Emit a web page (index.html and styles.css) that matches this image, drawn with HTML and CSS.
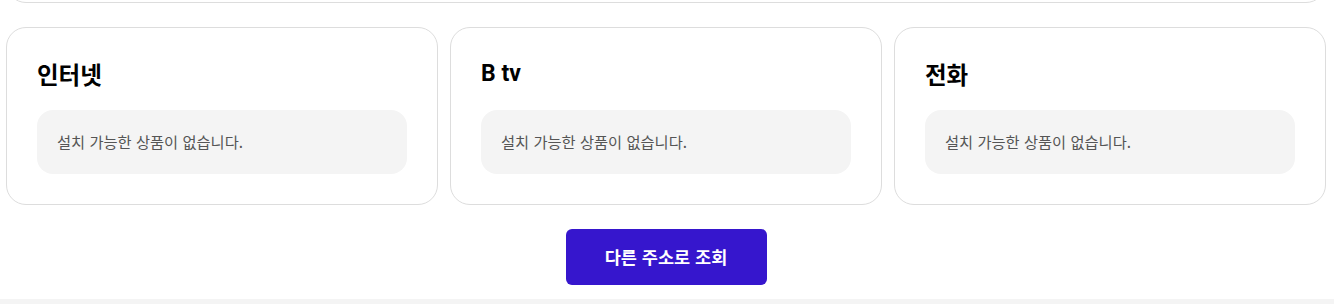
FILE: index.html
```html
<!DOCTYPE html>
<html lang="ko">
<head>
<meta charset="utf-8">
<link rel="stylesheet" href="styles.css">
</head>
<body>
<div class="page">
  <div class="top-card"></div>
  <div class="cards">
    <section class="card">
      <h3 class="card-title">인터넷</h3>
      <div class="empty">설치 가능한 상품이 없습니다.</div>
    </section>
    <section class="card">
      <h3 class="card-title latin">B tv</h3>
      <div class="empty">설치 가능한 상품이 없습니다.</div>
    </section>
    <section class="card">
      <h3 class="card-title">전화</h3>
      <div class="empty">설치 가능한 상품이 없습니다.</div>
    </section>
  </div>
  <div class="actions">
    <button class="btn-primary" type="button">다른 주소로 조회</button>
  </div>
</div>
<div class="footer"></div>
</body>
</html>
```
FILE: styles.css
```css
* { box-sizing: border-box; }
html, body { margin: 0; padding: 0; background: #fff; }
body {
  font-family: "Liberation Sans", "Noto Sans CJK KR", sans-serif;
  color: #000;
  overflow: hidden;
}
.page {
  padding: 0 8px 14px 6px;
}
.top-card {
  margin-top: -100px;
  height: 103px;
  border: 1px solid #dddddd;
  border-radius: 20px;
}
.cards {
  margin-top: 24px;
  display: grid;
  grid-template-columns: repeat(3, 1fr);
  gap: 12px;
}
.card {
  border: 1px solid #dddddd;
  border-radius: 20px;
  padding: 30px;
}
.card-title {
  margin: 0;
  font-size: 23.5px;
  line-height: 32px;
  font-weight: 700;
  font-family: "Noto Sans CJK KR", sans-serif;
}
.card-title.latin {
  font-size: 23px;
  font-family: Roboto, "Noto Sans CJK KR", sans-serif;
}
.empty {
  margin-top: 20px;
  height: 64px;
  display: flex;
  align-items: center;
  padding: 0 20px 3px;
  background: #f4f4f4;
  border-radius: 16px;
  font-family: "Noto Sans CJK KR", sans-serif;
  font-size: 15.3px;
  color: #555;
}
.actions {
  margin-top: 24px;
  display: flex;
  justify-content: center;
}
.btn-primary {
  width: 201px;
  height: 56px;
  border: 0;
  border-radius: 6px;
  padding: 0 0 2px;
  background: #3616cd;
  color: #fff;
  font-family: "Noto Sans CJK KR", sans-serif;
  font-size: 17.5px;
  font-weight: 700;
  cursor: pointer;
}
.footer {
  height: 40px;
  background: #f4f4f4;
}
```
